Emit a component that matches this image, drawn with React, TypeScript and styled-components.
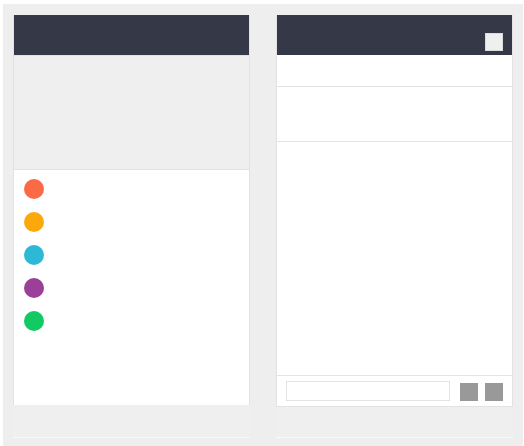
import React from 'react';
import styled, { createGlobalStyle } from 'styled-components';

const GlobalStyle = createGlobalStyle`
    body {
        margin: 0;
        background: #ffffff;
        font-family: "Liberation Sans", Arial, sans-serif;
    }
`
const Page = styled.div`
    padding: 4px 1px 0 3px;
`
const Frame = styled.div`
    height: 442px;
    box-sizing: border-box;
    background: #eeeeee;
    padding: 11px 10px 0 10px;
    display: grid;
    grid-template-columns: 237px 237px;
    column-gap: 26px;
    align-items: start;
`
const Column = styled.div`
    height: 423px;
    display: flex;
    flex-flow: column;
`
const Panel = styled.div<{ $closed?: boolean }>`
    display: flex;
    flex-flow: column;
    border-left: 1px solid #e2e2e2;
    border-right: 1px solid #e2e2e2;
    border-bottom: ${p => (p.$closed ? '1px solid #e2e2e2' : 'none')};
    background: #ffffff;
`
const Header = styled.div`
    height: 40px;
    background: #353947;
    display: flex;
    align-items: flex-end;
    justify-content: flex-end;
    padding: 0 9px 4px 0;
    box-sizing: border-box;
`
const HeaderButton = styled.div`
    width: 18px;
    height: 18px;
    box-sizing: border-box;
    background: #efefef;
    border: 1px solid #dcdcdc;
`
const Banner = styled.div`
    height: 115px;
    box-sizing: border-box;
    background: #efefef;
    border-top: 1px solid #e3e3e3;
    border-bottom: 1px solid #e3e3e3;
`
const List = styled.div`
    height: 235px;
    display: flex;
    flex-flow: column;
    gap: 13px;
    padding: 9px 0 0 10px;
    box-sizing: border-box;
`
const Dot = styled.div<{ $color: string }>`
    width: 20px;
    height: 20px;
    border-radius: 50%;
    background: ${p => p.$color};
`
const Row = styled.div<{ $height: number }>`
    height: ${p => p.$height}px;
    border-bottom: 1px solid #e3e3e3;
`
const Content = styled.div`
    height: 233px;
    border-bottom: 1px solid #e3e3e3;
`
const Composer = styled.div`
    height: 30px;
    display: flex;
    align-items: flex-start;
    padding: 5px 9px 0 9px;
    box-sizing: border-box;
    gap: 7px;
`
const Input = styled.div`
    width: 164px;
    height: 20px;
    box-sizing: border-box;
    border: 1px solid #e3e3e3;
    background: #ffffff;
    margin-right: 3px;
`
const Square = styled.div`
    width: 18px;
    height: 18px;
    margin-top: 2px;
    background: #999999;
`
const Footer = styled.div`
    flex: 1;
    background: #efefef;
    border-bottom: 1px solid #f9f9f9;
`

const colors = ['#f96a45', '#fba90a', '#2eb8d7', '#9c3f99', '#13c964'];

const App: React.FC = () => {
    return (
        <Page>
            <GlobalStyle />
            <Frame>
                <Column>
                    <Panel>
                        <Header />
                        <Banner />
                        <List>
                            {colors.map(c => <Dot key={c} $color={c} />)}
                        </List>
                    </Panel>
                    <Footer />
                </Column>
                <Column>
                    <Panel $closed>
                        <Header>
                            <HeaderButton />
                        </Header>
                        <Row $height={31} />
                        <Row $height={54} />
                        <Content />
                        <Composer>
                            <Input />
                            <Square />
                            <Square />
                        </Composer>
                    </Panel>
                    <Footer />
                </Column>
            </Frame>
        </Page>
    )
}

export default App;
